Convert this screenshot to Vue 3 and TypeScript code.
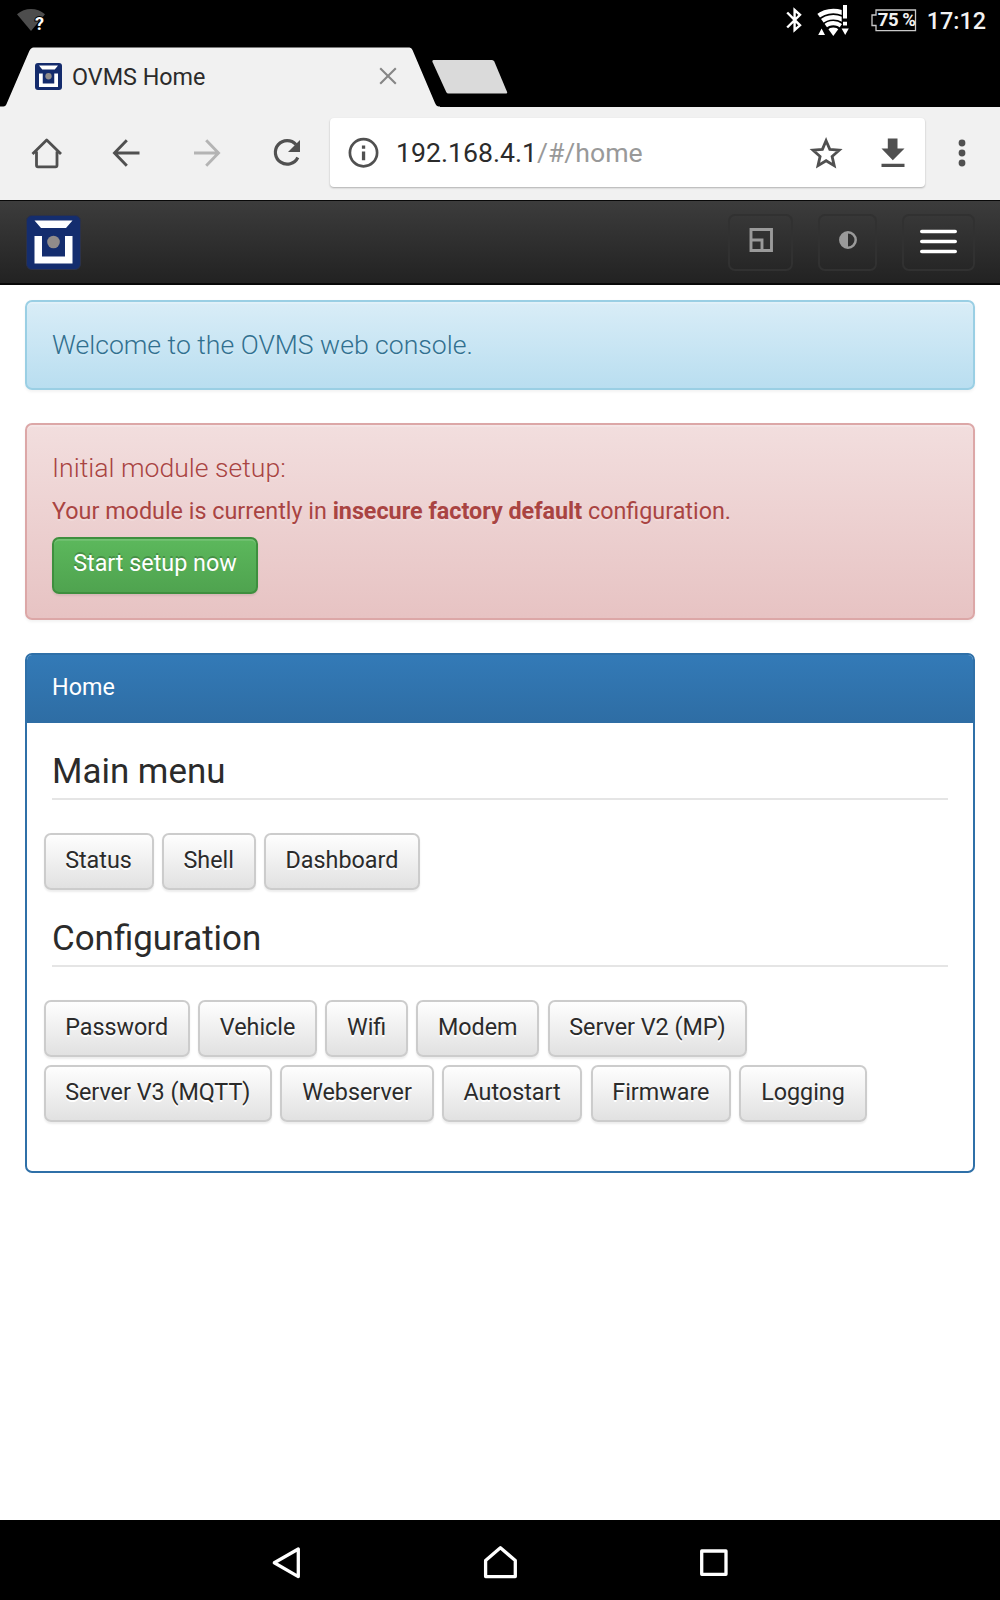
<script setup lang="ts">
interface MenuSection {
  title: string
  items: string[]
}

const sections: MenuSection[] = [
  { title: 'Main menu', items: ['Status', 'Shell', 'Dashboard'] },
  {
    title: 'Configuration',
    items: [
      'Password', 'Vehicle', 'Wifi', 'Modem', 'Server V2 (MP)',
      'Server V3 (MQTT)', 'Webserver', 'Autostart', 'Firmware', 'Logging',
    ],
  },
]
</script>

<template>
  <div class="screen">
    <div class="statusbar">
      <svg class="wifi-unknown" width="30" height="26" viewBox="15 7 30 26">
        <path d="M16 14.3C24 7.3 36 7.3 44 14.3L30 31Z" fill="#4d4d4d" />
        <text x="34" y="30" font-size="18" font-weight="700" fill="#fff" stroke="#000" stroke-width="2" paint-order="stroke">?</text>
      </svg>
      <div class="status-right">
        <svg width="18" height="26" viewBox="785 7 18 26" fill="none" stroke="#fff" stroke-width="2.4">
          <path d="M787.2 12.5L800 25.3L794.6 30V10L800 14.8L787.2 27.5" />
        </svg>
        <svg class="wifi" width="34" height="32" viewBox="816 4 34 32">
          <clipPath id="wedge"><path d="M833.3 36L816 12V4H841.7V24.5Z" /></clipPath>
          <g clip-path="url(#wedge)" fill="none" stroke="#fff">
            <circle cx="833.3" cy="36" r="25" stroke-width="4.6" />
            <circle cx="833.3" cy="36" r="18.8" stroke-width="4.4" />
            <circle cx="833.3" cy="36" r="12.8" stroke-width="4.2" />
            <circle cx="833.3" cy="36" r="4.2" stroke-width="8.4" />
          </g>
          <path d="M818.2 35L821.6 28.6L825 35Z M841.6 28.6H848.8L845.2 35Z M843 5H847V18.5H843Z M843 21.8H847V25.6H843Z" fill="#fff" />
        </svg>
        <div class="battery">
          <svg width="46" height="24" viewBox="871 7 46 24">
            <path d="M876 9H915.5V29.6H876V24.5H872V14H876Z" fill="none" stroke="#c9c9c9" stroke-width="1.3" />
          </svg>
          <span class="battery-text">75 %</span>
        </div>
        <span class="clock">17:12</span>
      </div>
    </div>

    <div class="tabstrip">
      <div class="tab">
        <svg width="27" height="27" viewBox="0 0 54 54">
          <rect width="54" height="54" rx="6" fill="#142b6c" />
          <path d="M8 5H46L39.5 13H14.5Z M8 21H15.5V41H38.5V21H46V48H8Z" fill="#fff" />
          <circle cx="27" cy="26.5" r="6.3" fill="#918c8a" />
        </svg>
        <span class="tab-title">OVMS Home</span>
        <svg width="18" height="18" viewBox="0 0 18 18" fill="none" stroke="#868686" stroke-width="2.1">
          <path d="M1.2 1.2L16.8 16.8M16.8 1.2L1.2 16.8" />
        </svg>
      </div>
      <svg class="newtab" width="76" height="34" viewBox="432 60 76 34">
        <path d="M433.5 60H492Q493.6 60 494.3 61.5L507.2 92.3Q507.6 93.6 506 93.6H448.5Q446.9 93.6 446.2 92.1L432.4 61.7Q432 60 433.5 60Z" fill="#dadada" />
      </svg>
    </div>

    <div class="toolbar">
      <svg width="32" height="32" viewBox="31 137 32 32" fill="none" stroke="#505050" stroke-width="2.8" stroke-linejoin="round">
        <path d="M32.5 154L46.7 140L61 154M36.5 151.5V165.3Q36.5 166.8 38 166.8H55.5Q57 166.8 57 165.3V151.5" />
      </svg>
      <svg class="ic-back" width="28" height="28" viewBox="112.5 139.5 28 28" fill="none" stroke="#505050" stroke-width="2.9">
        <path d="M127.3 140.8L115 153.5L127.3 166.2M115 153.5H140" />
      </svg>
      <svg class="ic-fwd" width="28" height="28" viewBox="192.5 139.5 28 28" fill="none" stroke="#b4b4b4" stroke-width="2.9">
        <path d="M205.7 140.8L218 153.5L205.7 166.2M218 153.5H193.5" />
      </svg>
      <svg class="ic-reload" width="30" height="30" viewBox="272 138 30 30">
        <path d="M296 144.5A11.8 11.8 0 1 0 297.8 157.5" fill="none" stroke="#505050" stroke-width="3.2" />
        <path d="M300 140V152H288Z" fill="#505050" />
      </svg>
      <div class="omnibox">
        <svg width="32" height="32" viewBox="0 0 32 32">
          <circle cx="15.5" cy="15.7" r="13.6" fill="none" stroke="#505050" stroke-width="2.7" />
          <path d="M13.9 8.5H17.2V11.8H13.9Z M13.9 14.5H17.2V23.2H13.9Z" fill="#505050" />
        </svg>
        <span class="url">192.168.4.1<span class="path">/#/home</span></span>
        <svg class="ic-star" width="34" height="32" viewBox="809.5 136.5 34 32">
          <path d="M826.6 140.2L830.3 148.9L839.7 149.7L832.6 155.9L834.7 165.1L826.6 160.2L818.5 165.1L820.6 155.9L813.5 149.7L822.9 148.9Z" fill="none" stroke="#505050" stroke-width="2.8" />
        </svg>
        <svg class="ic-dl" width="24" height="29" viewBox="881.5 138.5 24 29">
          <path d="M888.3 139H898V149H905L893.3 160.7L882 149H888.3Z M882 164.2H905V167.4H882Z" fill="#505050" />
        </svg>
      </div>
      <svg class="ic-more" width="8" height="28" viewBox="0 0 8 28" fill="#505050">
        <circle cx="4" cy="4" r="3.4" /><circle cx="4" cy="14" r="3.4" /><circle cx="4" cy="24" r="3.4" />
      </svg>
    </div>

    <nav class="navbar">
      <svg class="brand" width="55" height="55" viewBox="-.5 -.5 55 55">
        <rect width="54" height="54" rx="5.5" fill="#142d6e" stroke="#2b3148" />
        <path d="M8 5H46L39.5 12.5H14.5Z M8 20.5H15.5V41H38.5V20.5H46V48H8Z" fill="#fff" />
        <circle cx="27" cy="26.5" r="6.3" fill="#918c8a" />
      </svg>
      <button class="nav-btn window">
        <svg width="24" height="24" viewBox="0 0 24 24" fill="none" stroke="#9a9a9a" stroke-width="2.9">
          <path d="M2 1.5H22.5V22.5H2ZM2 12H13V22.5" />
        </svg>
      </button>
      <button class="nav-btn contrast">
        <svg width="18" height="18" viewBox="0 0 18 18">
          <circle cx="9" cy="9" r="7.7" fill="none" stroke="#9a9a9a" stroke-width="2.5" />
          <path d="M9 1A8 8 0 0 0 9 17Z" fill="#9a9a9a" />
        </svg>
      </button>
      <button class="nav-btn menu">
        <svg width="37" height="25" viewBox="0 0 37 25" stroke="#fff" stroke-width="3.6" stroke-linecap="round">
          <path d="M1.8 2.5H35.2M1.8 12.5H35.2M1.8 22.5H35.2" />
        </svg>
      </button>
    </nav>

    <main>
      <section class="alert info">
        <p class="lead">Welcome to the OVMS web console.</p>
      </section>

      <section class="alert danger">
        <p class="lead">Initial module setup:</p>
        <p class="note">Your module is currently in <strong>insecure factory default</strong> configuration.</p>
        <button class="btn success">Start setup now</button>
      </section>

      <section class="panel">
        <div class="panel-heading">Home</div>
        <div class="panel-body">
          <template v-for="s in sections" :key="s.title">
            <h2>{{ s.title }}</h2>
            <div class="buttons">
              <button v-for="item in s.items" :key="item" class="btn">{{ item }}</button>
            </div>
          </template>
        </div>
      </section>
    </main>

    <footer class="softkeys">
      <svg width="34" height="36" viewBox="270 1545 34 36"><path d="M274.3 1562.8L298.3 1549V1576.6Z" /></svg>
      <svg width="36" height="36" viewBox="483 1545 36 36"><path d="M500.4 1547.8L515.3 1560.5V1576.6H485.6V1560.5Z" /></svg>
      <svg width="34" height="36" viewBox="697 1545 34 36"><path d="M701.7 1551H726V1574.3H701.7Z" /></svg>
    </footer>
  </div>
</template>

<style>
body {
  margin: 0;
  background: #fff;
}
</style>

<style scoped>
* {
  box-sizing: border-box;
}
svg {
  display: block;
  flex: none;
}
button {
  margin: 0;
  font: inherit;
}
.screen {
  width: 1000px;
  height: 1600px;
  display: flex;
  flex-direction: column;
  overflow: hidden;
  background: #fff;
  color: #2b2b2b;
  font-family: Roboto, "Liberation Sans", sans-serif;
  font-size: 23.333px;
  line-height: 33.333px;
}
.statusbar {
  height: 47px;
  flex: none;
  display: flex;
  justify-content: space-between;
  align-items: flex-start;
  background: #000;
  color: #f2f2f2;
  padding: 0 14px 0 16px;
}
.wifi-unknown {
  margin-top: 7px;
}
.status-right {
  display: flex;
  height: 40px;
  align-items: center;
}
.wifi {
  margin-left: 13px;
}
.battery {
  position: relative;
  margin: 0 10px 1px 21px;
}
.battery-text {
  position: absolute;
  left: 7px;
  top: 0;
  font-size: 18.5px;
  line-height: 24px;
  font-weight: 700;
  white-space: nowrap;
  letter-spacing: -0.5px;
}
.clock {
  font-size: 23.333px;
  font-weight: 500;
  line-height: 42px;
  padding-top: 2px;
}
.tabstrip {
  height: 60px;
  flex: none;
  display: flex;
  background: #000;
}
.tab {
  width: 440px;
  height: 60px;
  padding: 0 43px 2px 35px;
  display: flex;
  align-items: center;
  background: #f1f1f1;
  clip-path: path("M0 59.5H3.5Q5.5 59.5 6.3 57.5L29.3 4Q31 .5 33.500 .5H409.5Q411.5 .5 412.5 3L435 56Q436.5 59.5 439 59.5H440V60H0Z");
}
.tab-title {
  flex: 1;
  padding: 3px 0 0 10px;
  color: #2b2b2b;
}
.newtab {
  margin: 13px 0 0 -8px;
}
.toolbar {
  height: 93px;
  flex: none;
  display: flex;
  align-items: center;
  padding: 0 0 2px 31px;
  background: #f1f1f1;
}
.ic-back {
  margin-left: 49px;
}
.ic-fwd {
  margin-left: 53px;
}
.ic-reload {
  margin-left: 51px;
}
.omnibox {
  width: 595px;
  height: 69px;
  margin-left: 28px;
  padding: 0 20px 0 18px;
  display: flex;
  align-items: center;
  background: #fff;
  border-radius: 4px;
  box-shadow: 0 1px 2px rgba(0, 0, 0, 0.28);
}
.url {
  flex: 1;
  margin-left: 16px;
  padding-top: 2px;
  font-size: 26.667px;
  color: #2b2b2b;
}
.url .path {
  color: #999;
}
.ic-dl {
  margin-left: 38px;
}
.ic-more {
  margin-left: 33px;
}
.navbar {
  height: 85px;
  flex: none;
  display: flex;
  align-items: center;
  padding: 0 25px 0 26px;
  border: solid #080808;
  border-width: 1px 0 2px;
  background: linear-gradient(#3c3c3c, #222);
}
.brand {
  margin-right: auto;
}
.nav-btn {
  height: 57px;
  padding: 0 0 4px;
  display: flex;
  flex-direction: column;
  align-items: center;
  justify-content: center;
  background: none;
  border: 2px solid #313131;
  border-radius: 7px;
}
.nav-btn.window {
  width: 65px;
}
.nav-btn.contrast {
  width: 59px;
  margin: 0 25px 0 25px;
}
.nav-btn.menu {
  width: 73px;
  padding: 0 0 1px;
}
main {
  flex: 1;
  padding: 15px 25px 0;
}
.alert {
  border: 2px solid;
  border-radius: 7px;
  padding: 24px 25px;
  margin-bottom: 33px;
  text-shadow: 0 1.67px 0 rgba(255, 255, 255, 0.2);
  box-shadow: inset 0 1.67px 0 rgba(255, 255, 255, 0.25), 0 1.67px 3px rgba(0, 0, 0, 0.05);
}
.alert p {
  margin: 0;
}
.alert.info {
  height: 90px;
  padding-top: 23.5px;
  color: #31708f;
  border-color: #9acfe4;
  background: linear-gradient(#d9edf7, #b9def0);
}
.alert.danger {
  height: 197px;
  color: #a94442;
  border-color: #dca7a7;
  background: linear-gradient(#f2dede, #e7c3c3);
}
.lead {
  font-size: 26.6px;
  font-weight: 300;
  line-height: 37.333px;
}
.alert .note {
  margin: 7.667px 0 9px;
  line-height: 34px;
}
.note strong {
  font-weight: 700;
}
.btn {
  height: 57px;
  padding: 0 19.65px 2px;
  border: 2px solid #ccc;
  border-radius: 7px;
  color: #2b2b2b;
  background: linear-gradient(#fff, #e0e0e0) border-box;
  text-shadow: 0 1.67px 0 #fff;
  box-shadow: inset 0 1.67px 0 rgba(255, 255, 255, 0.15), 0 1.67px 2px rgba(0, 0, 0, 0.075);
  white-space: nowrap;
}
.btn.success {
  display: block;
  padding: 0 19.2px 3px;
  color: #fff;
  border-color: #3e8f3e;
  background: linear-gradient(#5cb85c, #4fa34f);
  text-shadow: 0 -1.67px 0 rgba(0, 0, 0, 0.2);
}
.panel {
  height: 520px;
  border: 2px solid #2f70a8;
  border-radius: 7px;
  overflow: hidden;
}
.panel-heading {
  height: 68px;
  padding: 16px 25px 0;
  color: #fff;
  background: linear-gradient(#337ab7, #2e6da4);
}
.panel-body {
  padding: 25px 25px 0;
}
h2 {
  margin: 0;
  height: 52px;
  padding-top: 1px;
  font-size: 34.9px;
  font-weight: 400;
  line-height: 46px;
  border-bottom: 2px solid #e5e5e5;
}
.buttons {
  display: flex;
  flex-wrap: wrap;
  gap: 8px 8.35px;
  margin: 33px -20px 25px -8.5px;
}
.softkeys {
  height: 80px;
  flex: none;
  display: flex;
  align-items: center;
  justify-content: space-between;
  padding: 5px 269px 0 270px;
  background: #000;
}
.softkeys path {
  fill: none;
  stroke: #fff;
  stroke-width: 3.3;
  stroke-linejoin: round;
}
</style>
